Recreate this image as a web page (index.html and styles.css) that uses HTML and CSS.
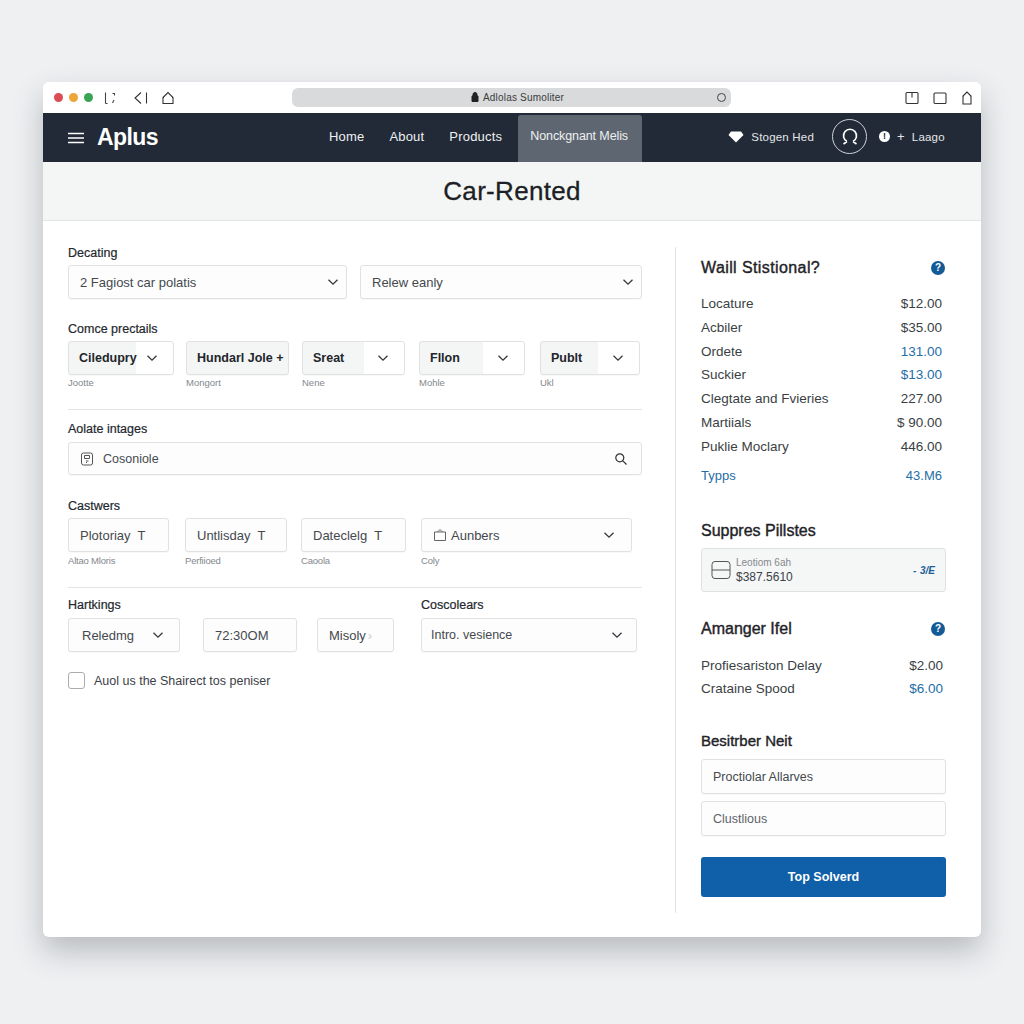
FILE: index.html
```html
<!DOCTYPE html>
<html lang="en">
<head>
<meta charset="UTF-8">
<title>Car-Rented</title>
<link rel="stylesheet" href="styles.css">
</head>
<body>
<svg class="sprites" width="0" height="0">
    <symbol id="chev" viewBox="0 0 12 12"><path d="M1.5 3.8 6 8.2l4.5-4.4" fill="none" stroke="currentColor" stroke-width="1.3"/></symbol>
</svg>
<div class="window">
    <div class="titlebar">
        <span class="dot red"></span><span class="dot amber"></span><span class="dot green"></span>
        <svg class="tool first" width="14" height="14" viewBox="0 0 14 14" fill="none" stroke="#444" stroke-width="1.1"><path d="M2.5 1.5v11M2.5 12.500h2M9.500 2.500h2v2M11 9l-1.500 3"/></svg>
        <svg class="tool" width="16" height="14" viewBox="0 0 16 14" fill="none" stroke="#333" stroke-width="1.1"><path d="M8 1.5 2 7l6 5.5M13.5 1.5v11"/></svg>
        <svg class="tool" width="14" height="14" viewBox="0 0 14 14" fill="none" stroke="#333" stroke-width="1.1"><path d="M2 6.500 7 1.500l5 5v6H2zM2 6.500h1M11 6.500h1"/></svg>
        <div class="address">
            <span class="address-text"><svg width="8" height="10" viewBox="0 0 8 10"><path d="M1 4h6v5.500H1zM2 4V2.500a2 2 0 0 1 4 0V4" fill="#222" stroke="#222"/></svg>Adlolas Sumoliter</span>
            <span class="reload"></span>
        </div>
        <div class="tools-right">
            <svg width="14" height="14" viewBox="0 0 14 14" fill="none" stroke="#333" stroke-width="1.1"><rect x="1" y="1.500" width="12" height="11" rx="1"/><path d="M7 1.500v5"/></svg>
            <svg width="14" height="14" viewBox="0 0 14 14" fill="none" stroke="#333" stroke-width="1.1"><rect x="1" y="2" width="12" height="10.500" rx="1"/></svg>
            <svg width="12" height="14" viewBox="0 0 12 14" fill="none" stroke="#333" stroke-width="1.1"><path d="M6 1 2 5v8h8V5zM2 5h1M9 5h1"/></svg>
        </div>
    </div>

    <nav class="nav">
        <svg class="burger" width="16" height="12" viewBox="0 0 16 12" stroke="#fff" stroke-width="1.500"><path d="M0 1.500h16M0 6h16M0 10.500h16"/></svg>
        <span class="logo">Aplus</span>
        <div class="nav-links">
            <a>Home</a>
            <a>About</a>
            <a>Products</a>
            <a class="active">Nonckgnant Melis</a>
        </div>
        <div class="nav-right">
            <svg width="16" height="12" viewBox="0 0 16 12"><path d="M3 .5h10l2.500 3.500L8 11.500.5 4z" fill="#fff"/></svg>
            <span class="nav-user">Stogen Hed</span>
            <span class="avatar">
                <svg width="24" height="24" viewBox="0 0 24 24" fill="none" stroke="#fff" stroke-width="1.600"><path d="M9 16.500a6.500 6.500 0 1 1 6 0M9 16.500 5.500 19M15 16.500l3.500 2.500"/></svg>
            </span>
            <span class="alert">!</span>
            <span class="plus">+</span>
            <span class="nav-user">Laago</span>
        </div>
    </nav>

    <header class="page-title">
        <h1>Car-Rented</h1>
    </header>

    <div class="content">
        <main class="form">
            <h3 class="label">Decating</h3>
            <div class="row row-a">
                <div class="field"><span>2 Fagiost car polatis</span><svg class="chev"><use href="#chev"/></svg></div>
                <div class="field"><span>Relew eanly</span><svg class="chev"><use href="#chev"/></svg></div>
            </div>

            <h3 class="label gap-a">Comce prectails</h3>
            <div class="row-b">
                <div><div class="field split s64"><b>Ciledupry</b><svg class="chev"><use href="#chev"/></svg></div><p class="sub">Jootte</p></div>
                <div><div class="field split full"><b>Hundarl Jole +</b></div><p class="sub">Mongort</p></div>
                <div><div class="field split s60"><b>Sreat</b><svg class="chev"><use href="#chev"/></svg></div><p class="sub">Nene</p></div>
                <div><div class="field split s61"><b>Fllon</b><svg class="chev"><use href="#chev"/></svg></div><p class="sub">Mohle</p></div>
                <div><div class="field split s58"><b>Publt</b><svg class="chev"><use href="#chev"/></svg></div><p class="sub">Ukl</p></div>
            </div>

            <hr class="rule rule-a">

            <h3 class="label">Aolate intages</h3>
            <div class="field search">
                <svg class="doc" width="14" height="14" viewBox="0 0 14 14" fill="none" stroke="#555"><rect x="1.500" y="1" width="11" height="12" rx="2"/><path d="M4.500 3.500h5v3h-5zM6 9h2.500M6 10.500h1"/></svg>
                <span>Cosoniole</span>
                <svg class="lens" width="14" height="14" viewBox="0 0 14 14" fill="none" stroke="#333" stroke-width="1.200"><circle cx="5.800" cy="5.800" r="4"/><path d="m8.800 8.800 3.700 3.700"/></svg>
            </div>

            <h3 class="label gap-b">Castwers</h3>
            <div class="row row-c">
                <div><div class="field"><span>Plotoriay&nbsp; T</span></div><p class="sub faint">Altao Mloris</p></div>
                <div><div class="field"><span>Untlisday&nbsp; T</span></div><p class="sub faint">Perfiioed</p></div>
                <div><div class="field"><span>Dateclelg&nbsp; T</span></div><p class="sub faint">Caoola</p></div>
                <div><div class="field tight">
                    <svg class="bag" width="14" height="14" viewBox="0 0 14 14" fill="none" stroke="#666"><path d="M1.500 4h11v8.500h-11zM4.500 4 7 1.500 9.500 4"/></svg>
                    <span>Aunbers</span><svg class="chev"><use href="#chev"/></svg>
                </div><p class="sub faint">Coly</p></div>
            </div>

            <hr class="rule rule-b">

            <div class="row row-labels">
                <h3 class="label">Hartkings</h3>
                <h3 class="label">Coscolears</h3>
            </div>
            <div class="row row-d">
                <div class="field narrow"><span>Reledmg</span><svg class="chev"><use href="#chev"/></svg></div>
                <div class="field"><span>72:30OM</span></div>
                <div class="field narrow-b"><span>Misoly</span><i class="small-arrow">&rsaquo;</i></div>
                <div class="field narrow-c"><span>Intro. vesience</span><svg class="chev"><use href="#chev"/></svg></div>
            </div>

            <label class="check"><span class="box"></span>Auol us the Shairect tos peniser</label>
        </main>

        <aside class="side">
            <div class="side-head">
                <h2 class="wide">Waill Stistional?</h2><span class="help">?</span>
            </div>
            <ul class="prices">
                <li><span>Locature</span><span>$12.00</span></li>
                <li><span>Acbiler</span><span>$35.00</span></li>
                <li><span>Ordete</span><span class="blue">131.00</span></li>
                <li><span>Suckier</span><span class="blue">$13.00</span></li>
                <li><span>Clegtate and Fvieries</span><span>227.00</span></li>
                <li><span>Martiials</span><span>$ 90.00</span></li>
                <li><span>Puklie Moclary</span><span>446.00</span></li>
                <li class="total blue"><span>Typps</span><span>43.M6</span></li>
            </ul>

            <h2 class="side-title-a">Suppres Pillstes</h2>
            <div class="pay-card">
                <svg width="20" height="20" viewBox="0 0 20 20" fill="none" stroke="#555"><rect x="1" y="1.500" width="18" height="17" rx="3"/><path d="M1 10h18"/></svg>
                <div class="pay-text">
                    <small>Leotiom 6ah</small>
                    <span>$387.5610</span>
                </div>
                <em>- &#8202;3/E</em>
            </div>

            <div class="side-head head-b">
                <h2>Amanger Ifel</h2><span class="help">?</span>
            </div>
            <ul class="prices short">
                <li><span>Profiesariston Delay</span><span>$2.00</span></li>
                <li><span>Crataine Spood</span><span class="blue">$6.00</span></li>
            </ul>

            <h2 class="side-title-b">Besitrber Neit</h2>
            <div class="field side-input"><span>Proctiolar Allarves</span></div>
            <div class="field side-input muted"><span>Clustlious</span></div>
            <button class="submit">Top Solverd</button>
        </aside>
    </div>
</div>
</body>
</html>
```

FILE: styles.css
```css
* {
    margin: 0;
    padding: 0;
    box-sizing: border-box;
}

body {
    padding: 82px 43px 0;
    height: 1024px;
    overflow: hidden;
    background: #eef0f2;
    font-family: "Liberation Sans", Arial, sans-serif;
    color: #23282e;
}

.sprites {
    position: absolute;
}

.window {
    width: 938px;
    height: 855px;
    border-radius: 6px;
    overflow: hidden;
    background: #fff;
    box-shadow: 0 14px 30px rgba(70, 76, 84, 0.32);
}

.titlebar {
    display: flex;
    align-items: center;
    padding: 0 8px 0 11px;
    height: 31px;
    background: #fff;
}

.dot {
    margin-right: 6px;
    border-radius: 50%;
    width: 9px;
    height: 9px;
}

.red { background: #dc4c55; }
.amber { background: #eea63a; }
.green { background: #3aa455; }

.tool {
    margin-right: 12px;
}

.tool.first {
    margin-left: 4px;
    margin-right: 16px;
}

.address {
    position: relative;
    display: flex;
    align-items: center;
    justify-content: center;
    margin-left: 105px;
    padding-left: 12px;
    border-radius: 6px;
    width: 439px;
    height: 19px;
    background: #d9dadb;
    font-size: 10px;
    letter-spacing: 0.2px;
    color: #3a3d40;
}

.address-text svg {
    margin-right: 4px;
    vertical-align: -1px;
}

.reload {
    position: absolute;
    right: 5px;
    top: 5px;
    border: 1.5px solid #444;
    border-radius: 50%;
    width: 9px;
    height: 9px;
}

.tools-right {
    display: flex;
    align-items: center;
    gap: 14px;
    margin-left: auto;
}

.nav {
    display: flex;
    align-items: center;
    padding-left: 25px;
    height: 49px;
    background: #212a36;
    color: #fff;
}

.logo {
    margin-left: 13px;
    font-size: 23px;
    font-weight: bold;
    letter-spacing: -0.6px;
}

.nav-links {
    display: flex;
    align-items: stretch;
    margin-left: 171px;
    height: 47px;
    align-self: flex-end;
    font-size: 13px;
    letter-spacing: 0.2px;
}

.nav-links a {
    display: flex;
    align-items: center;
    padding-bottom: 5px;
    margin-right: 25px;
    color: #eef0f2;
}

.nav-links a.active {
    margin-left: -9px;
    padding: 0 0 5px 12px;
    border-radius: 3px 3px 0 0;
    width: 124px;
    background: #5e6771;
    font-size: 12.500px;
    letter-spacing: -0.1px;
    white-space: nowrap;
}

.nav-right {
    display: flex;
    align-items: center;
    margin-left: 61px;
    padding-bottom: 2px;
    font-size: 11.500px;
    letter-spacing: 0.2px;
    color: #e4e6e9;
}

.nav-user {
    margin-left: 7px;
}

.avatar {
    display: flex;
    align-items: center;
    justify-content: center;
    margin-left: 18px;
    border: 1px solid #cfd3d8;
    border-radius: 50%;
    width: 35px;
    height: 35px;
}

.alert {
    margin-left: 12px;
    border-radius: 50%;
    width: 11px;
    height: 11px;
    background: #fff;
    color: #212a36;
    font-size: 9px;
    font-weight: bold;
    line-height: 11px;
    text-align: center;
}

.plus {
    margin-left: 7px;
    font-size: 13px;
}

.plus + .nav-user {
    margin-left: 7px;
}

.page-title {
    display: flex;
    align-items: center;
    justify-content: center;
    height: 59px;
    border-bottom: 1px solid #e4e5e6;
    background: #f4f5f5;
}

.page-title h1 {
    font-size: 26px;
    font-weight: normal;
    letter-spacing: 0.3px;
    -webkit-text-stroke: 0.3px #1c1f23;
    color: #1c1f23;
}

.content {
    display: flex;
    height: 716px;
}

.form {
    padding: 25px 33px 0 25px;
    width: 632px;
    height: 692px;
}

.label {
    margin-bottom: 5px;
    height: 14px;
    font-size: 12.500px;
    font-weight: normal;
    line-height: 14px;
    -webkit-text-stroke: 0.2px #23282e;
    color: #23282e;
}

.gap-a { margin-top: 23px; }
.gap-b { margin-top: 24px; }

.row {
    display: grid;
}

.row-a {
    grid-template-columns: 279px 282px;
    column-gap: 13px;
}

.row-a .field {
    padding-right: 7px;
}

.row-b {
    display: flex;
    margin-top: 1px;
}

.row-b > div:nth-child(1) { margin-right: 12px; width: 106px; }
.row-b > div:nth-child(2) { margin-right: 13px; width: 103px; }
.row-b > div:nth-child(3) { margin-right: 14px; width: 103px; }
.row-b > div:nth-child(4) { margin-right: 15px; width: 106px; }
.row-b > div:nth-child(5) { width: 100px; }

.row-b .sub {
    margin-top: 1px;
}

.row-c {
    grid-template-columns: 101px 102px 105px 211px;
    column-gap: 15px;
    margin-top: 1px;
}

.row-c > div:nth-child(2) {
    margin-left: 1px;
    margin-right: -1px;
}

.row-labels {
    grid-template-columns: 353px 216px;
}

.row-d {
    grid-template-columns: 112px 94px 77px 217px;
    column-gap: 23px;
    margin-top: 1px;
}

.row-d .field:nth-child(3) {
    margin-left: -3px;
    width: 77px;
}

.row-d .field:nth-child(4) {
    margin-left: 1px;
}

.field {
    display: flex;
    align-items: center;
    justify-content: space-between;
    padding: 0 11px;
    height: 34px;
    border: 1px solid #dfe1e3;
    border-radius: 3px;
    background: #fdfdfd;
    box-shadow: 0 1px 1px rgba(0, 0, 0, 0.03);
    font-size: 13px;
    color: #44494e;
    white-space: nowrap;
}

.chev {
    flex: none;
    width: 12px;
    height: 12px;
    color: #33383d;
}

.split {
    padding: 0 15px 0 10px;
    background: linear-gradient(to right, #f4f5f5 var(--split), #fff var(--split));
    color: #22262b;
}

.split b {
    font-size: 12.500px;
}

.s64 { --split: 64%; }
.s60 { --split: 60%; }
.s61 { --split: 61%; }
.s58 { --split: 58%; }
.full { background: #f4f5f5; }

.sub {
    margin-top: 3px;
    height: 13px;
    font-size: 9.500px;
    line-height: 13px;
    color: #84888d;
}

.faint {
    margin-top: 2px;
    letter-spacing: -0.2px;
}

.rule {
    border: none;
    border-top: 1px solid #e3e4e6;
}

.rule-a { margin: 20px 0 12px; }
.rule-b { margin: 20px 0 10px; }

.search {
    justify-content: flex-start;
    margin-top: 6px;
    height: 33px;
    color: #464b50;
    font-size: 12.500px;
}

.search .doc {
    margin-right: 9px;
}

.search .lens {
    margin-left: auto;
    margin-right: 2px;
}

.tight {
    justify-content: flex-start;
}

.bag {
    margin-right: 4px;
}

.tight .chev {
    margin-left: auto;
    margin-right: 5px;
}

.narrow { padding: 0 15px 0 13px; }
.narrow-b { padding: 0 21px 0 11px; }
.narrow-c { padding: 0 13px 0 9px; font-size: 12.500px; }

.small-arrow {
    color: #c9ccd0;
    font-style: normal;
}

.check {
    display: flex;
    align-items: center;
    margin-top: 20px;
    font-size: 12.500px;
    color: #3c4146;
}

.box {
    margin-right: 9px;
    border: 1px solid #a9adb2;
    border-radius: 3px;
    width: 17px;
    height: 17px;
    background: #fff;
}

.side {
    margin-top: 26px;
    padding: 11px 35px 0 25px;
    width: 306px;
    height: 666px;
    border-left: 1px solid #e3e4e6;
}

.side h2 {
    font-size: 16px;
    font-weight: normal;
    -webkit-text-stroke: 0.4px #1f2328;
    color: #1f2328;
}

.side h2.wide {
    letter-spacing: 0.4px;
}

.side-head {
    display: flex;
    align-items: center;
    justify-content: space-between;
    height: 20px;
    padding-right: 1px;
}

.help {
    margin-right: 0;
    border-radius: 50%;
    width: 14px;
    height: 14px;
    background: #145a96;
    color: #fff;
    font-size: 10px;
    font-weight: bold;
    line-height: 14px;
    text-align: center;
}

.prices {
    margin-top: 14px;
    list-style: none;
    font-size: 13.500px;
    color: #3a3f44;
}

.prices li {
    display: flex;
    justify-content: space-between;
    padding-right: 4px;
    height: 23.800px;
    line-height: 24px;
}

.blue {
    color: #1f6ea6;
}

.prices .total {
    margin-top: 5px;
    font-size: 13px;
}

.side-title-a {
    margin-top: 35px;
    height: 20px;
}

.pay-card {
    display: flex;
    align-items: center;
    margin-top: 6px;
    padding: 0 10px 0 9px;
    height: 44px;
    border: 1px solid #dfe1e3;
    border-radius: 3px;
    background: #f5f6f6;
}

.pay-text {
    display: flex;
    flex-direction: column;
    margin-left: 5px;
    line-height: 14px;
}

.pay-text small {
    font-size: 10px;
    color: #85898e;
}

.pay-text span {
    font-size: 12px;
    color: #3c4146;
}

.pay-card em {
    margin-left: auto;
    font-size: 10px;
    font-weight: bold;
    color: #1d5f98;
}

.head-b {
    margin-top: 27px;
}

.short {
    margin-top: 15px;
}

.short li {
    padding-right: 3px;
    height: 23px;
    line-height: 23px;
}

.side-title-b {
    margin-top: 32px;
    height: 20px;
}

.side h2.side-title-b {
    font-size: 15px;
}

.side-input {
    margin-top: 7px;
    height: 35px;
    font-size: 12.500px;
}

.side-title-b + .side-input {
    margin-top: 7px;
}

.muted {
    color: #5e6368;
}

.submit {
    display: block;
    margin-top: 21px;
    border: none;
    border-radius: 3px;
    width: 100%;
    height: 40px;
    background: #0f60a8;
    color: #fff;
    font-family: inherit;
    font-size: 12.500px;
    font-weight: bold;
}
```
